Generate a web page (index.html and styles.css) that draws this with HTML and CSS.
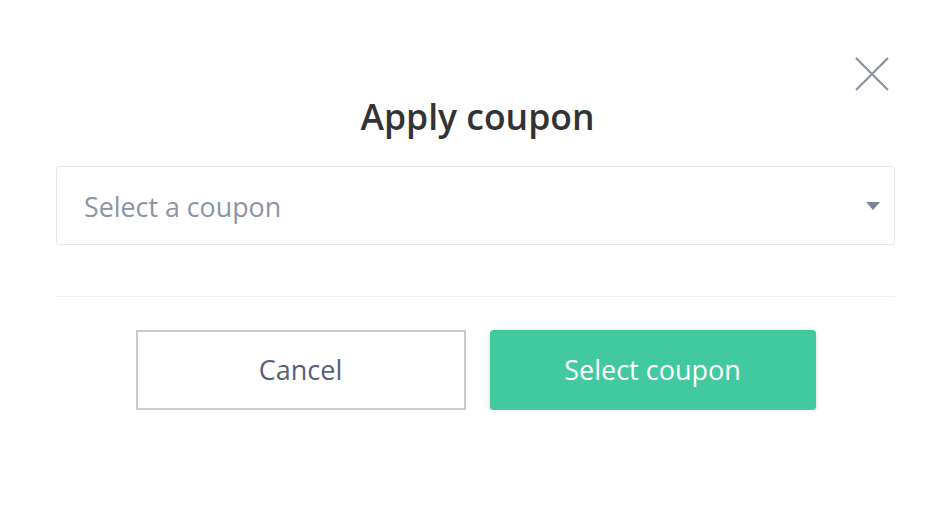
FILE: index.html
```html
<!DOCTYPE html>
<html>
<head>
<meta charset="utf-8">
<link rel="stylesheet" href="styles.css">
</head>
<body>
<div class="modal">
  <div class="close-row">
    <button class="close" aria-label="Close">
      <svg width="34" height="34" viewBox="0 0 34 34"><path d="M1 1L33 33M33 1L1 33" stroke="#8a92a3" stroke-width="2.2" fill="none"/></svg>
    </button>
  </div>
  <h2 class="title">Apply coupon</h2>
  <div class="select">
    <span class="placeholder">Select a coupon</span>
    <span class="caret"></span>
  </div>
  <div class="divider"></div>
  <div class="actions">
    <button class="btn btn-cancel">Cancel</button>
    <button class="btn btn-primary">Select coupon</button>
  </div>
</div>
</body>
</html>
```
FILE: styles.css
```css
html, body {
  margin: 0;
  padding: 0;
  background: #ffffff;
}
body {
  font-family: "Open Sans", "Liberation Sans", sans-serif;
}
.modal {
  width: 839px;
  margin-left: 56px;
  padding-top: 57px;
}
.close-row {
  display: flex;
  justify-content: flex-end;
  padding-right: 6px;
  height: 34px;
}
.close {
  border: 0;
  background: none;
  padding: 0;
  width: 34px;
  height: 34px;
  display: block;
}
.close svg { display: block; }
.title {
  margin: 1px 0 0 0;
  text-align: center;
  font-weight: 600;
  font-size: 35.5px;
  line-height: 48px;
  color: #333333;
  letter-spacing: 0;
  padding-left: 4px;
}
.select {
  margin-top: 26px;
  height: 77px;
  border: 1px solid #e6e8ed;
  border-radius: 3px;
  display: flex;
  align-items: center;
  justify-content: space-between;
  padding: 0 14px 0 27px;
}
.placeholder {
  font-size: 26.8px;
  color: #8b93a6;
  margin-top: 1px;
}
.caret {
  width: 0;
  height: 0;
  border-left: 7px solid transparent;
  border-right: 7px solid transparent;
  border-top: 8px solid #7c8497;
}
.divider {
  margin-top: 51px;
  height: 1px;
  background: #f2f2f5;
}
.actions {
  margin-top: 33px;
  display: flex;
  justify-content: center;
  gap: 24px;
  padding-right: 0;
}
.btn {
  font-family: inherit;
  font-size: 27px;
  height: 80px;
  border-radius: 3px;
  cursor: pointer;
  padding: 0 0 2px 0;
}
.btn-cancel {
  width: 330px;
  background: #ffffff;
  border: 2px solid #c9ccd2;
  border-radius: 0;
  color: #566079;
}
.btn-primary {
  width: 326px;
  background: #43c9a0;
  border: 0;
  color: #ffffff;
  box-shadow: 0 2px 5px rgba(0,0,0,0.18);
  border-radius: 4px;
}
```
